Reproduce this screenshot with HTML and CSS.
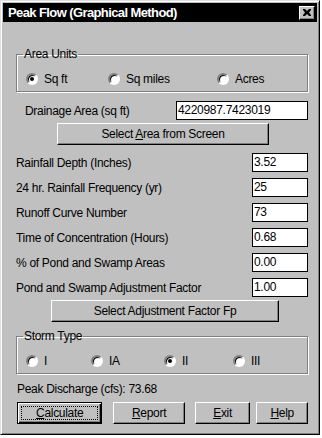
FILE: index.html
```html
<!DOCTYPE html>
<html lang="en">
<head>
    <meta charset="UTF-8">
    <title>Peak Flow (Graphical Method)</title>
    <link rel="stylesheet" href="styles.css">
</head>
<body>
    <div class="window">
        <div class="titlebar">
            <span class="title">Peak Flow (Graphical Method)</span>
            <span class="close">
                <svg width="8" height="7" viewBox="0 0 8 7"><path d="M0 0h2l2 2 2-2h2v1L6 3.5 8 6v1H6L4 5 2 7H0V6l2-2.5L0 1z" fill="#000"/></svg>
            </span>
        </div>
        <div class="content">
            <fieldset class="group units">
                <legend>Area Units</legend>
                <div class="options">
                    <label class="option opt-sqft"><span class="radio checked"></span>Sq ft</label>
                    <label class="option opt-miles"><span class="radio"></span>Sq miles</label>
                    <label class="option"><span class="radio"></span>Acres</label>
                </div>
            </fieldset>

            <div class="row drainage">
                <span class="label">Drainage Area (sq ft)</span>
                <span class="field wide">4220987.7423019</span>
            </div>
            <div class="btn-line area-line">
                <button class="btn area-btn">Select <u>A</u>rea from Screen</button>
            </div>

            <div class="rows">
                <div class="row"><span class="label">Rainfall Depth (Inches)</span><span class="field">3.52</span></div>
                <div class="row"><span class="label">24 hr. Rainfall Frequency (yr)</span><span class="field">25</span></div>
                <div class="row"><span class="label">Runoff Curve Number</span><span class="field">73</span></div>
                <div class="row"><span class="label">Time of Concentration (Hours)</span><span class="field">0.68</span></div>
                <div class="row"><span class="label">% of Pond and Swamp Areas</span><span class="field">0.00</span></div>
                <div class="row"><span class="label">Pond and Swamp Adjustment Factor</span><span class="field">1.00</span></div>
            </div>
            <div class="btn-line fp-line">
                <button class="btn fp-btn">Select Adjustment Factor Fp</button>
            </div>

            <fieldset class="group storm">
                <legend>Storm Type</legend>
                <div class="options">
                    <label class="option st-1"><span class="radio"></span>I</label>
                    <label class="option st-2"><span class="radio"></span>IA</label>
                    <label class="option st-3"><span class="radio checked"></span>II</label>
                    <label class="option"><span class="radio"></span>III</label>
                </div>
            </fieldset>

            <div class="result">Peak Discharge (cfs): 73.68</div>

            <div class="actions">
                <button class="btn default calc"><span class="focus"><u>C</u>alculate</span></button>
                <button class="btn report"><u>R</u>eport</button>
                <button class="btn exit"><u>E</u>xit</button>
                <button class="btn help"><u>H</u>elp</button>
            </div>
        </div>
    </div>
</body>
</html>
```

FILE: styles.css
```css
body {
    margin: 0;
    background-color: #fff;
    font-family: "Liberation Sans", Arial, sans-serif;
    font-size: 12px;
    letter-spacing: -0.3px;
    color: #000;
}
.window {
    width: 316px;
    height: 431px;
    background-color: #c0c0c0;
    border: 1px solid;
    border-color: #dfdfdf #000 #000 #dfdfdf;
    box-shadow: inset 1px 1px 0 #fff, inset -1px -1px 0 #808080;
    padding: 1px;
}
.titlebar {
    height: 19px;
    margin: 1px;
    background-color: #000;
    color: #fff;
    display: flex;
    align-items: center;
    justify-content: space-between;
    padding: 0 2px 0 5px;
}
.title {
    font-weight: bold;
    font-size: 13px;
    letter-spacing: -0.6px;
}
.close {
    width: 14px;
    height: 12px;
    background-color: #c0c0c0;
    border: 1px solid;
    border-color: #fff #000 #000 #fff;
    box-shadow: inset -1px -1px 0 #808080;
    display: flex;
    align-items: center;
    justify-content: center;
}
.content {
    padding: 0 10px 0 14px;
}
/* Group boxes */
.group {
    margin: 25px 0 0 0;
    padding: 0 8px 5px 9px;
    border: 1px solid #808080;
    box-shadow: inset 1px 1px 0 #fff, 1px 1px 0 #fff;
}
.group legend {
    padding: 0 1px;
    margin-left: -3px;
    line-height: 14px;
}
.options {
    display: flex;
    align-items: center;
    padding-top: 11px;
    height: 14px;
}
.option {
    display: flex;
    align-items: center;
}
.opt-sqft { width: 82px; }
.opt-miles { width: 109px; }
.st-1 { width: 65px; }
.st-2 { width: 73px; }
.st-3 { width: 69px; }
.radio {
    width: 8px;
    height: 8px;
    border-radius: 50%;
    background-color: #fff;
    border: 2px solid;
    border-color: #808080 #fff #fff #808080;
    box-shadow: inset 1px 1px 0 #000;
    margin-right: 6px;
    position: relative;
}
.radio.checked::after {
    content: "";
    position: absolute;
    left: 2px;
    top: 2px;
    width: 4px;
    height: 4px;
    border-radius: 50%;
    background-color: #000;
}
/* Label + field rows */
.row {
    display: flex;
    justify-content: space-between;
    align-items: center;
    height: 19px;
}
.drainage {
    margin-top: 9px;
    padding-left: 9px;
}
.rows {
    margin-top: 8px;
    display: flex;
    flex-direction: column;
    gap: 6px;
}
.field {
    width: 53px;
    height: 17px;
    line-height: 17px;
    background-color: #fff;
    border: 1px solid #000;
    padding-left: 1px;
    box-sizing: content-box;
}
.field.wide {
    width: 129px;
}
/* Buttons */
.btn {
    font-family: inherit;
    font-size: 12px;
    letter-spacing: -0.3px;
    color: #000;
    background-color: #c0c0c0;
    border: 1px solid;
    border-color: #fff #000 #000 #fff;
    box-shadow: inset -1px -1px 0 #808080;
    padding: 0;
    height: 22px;
}
.btn-line {
    display: flex;
}
.area-line {
    margin-top: 3px;
    padding-left: 41px;
}
.area-btn { width: 212px; }
.fp-line {
    margin-top: 3px;
    padding-left: 35px;
}
.fp-btn { width: 228px; }
.storm {
    margin-top: 7px;
}
.result {
    margin-top: 8px;
    padding-left: 1px;
    line-height: 14px;
}
.actions {
    margin-top: 6px;
    display: flex;
    padding-left: 1px;
}
.calc {
    width: 86px;
    border: 1px solid #000;
    box-shadow: inset 1px 1px 0 #fff, inset -1px -1px 0 #000, inset -2px -2px 0 #808080;
    padding: 3px;
}
.focus {
    display: block;
    border: 1px dotted #000;
    height: 12px;
    line-height: 12px;
}
.report { width: 72px; margin-left: 11px; }
.exit { width: 56px; margin-left: 10px; }
.help { width: 52px; margin-left: 6px; }
```
